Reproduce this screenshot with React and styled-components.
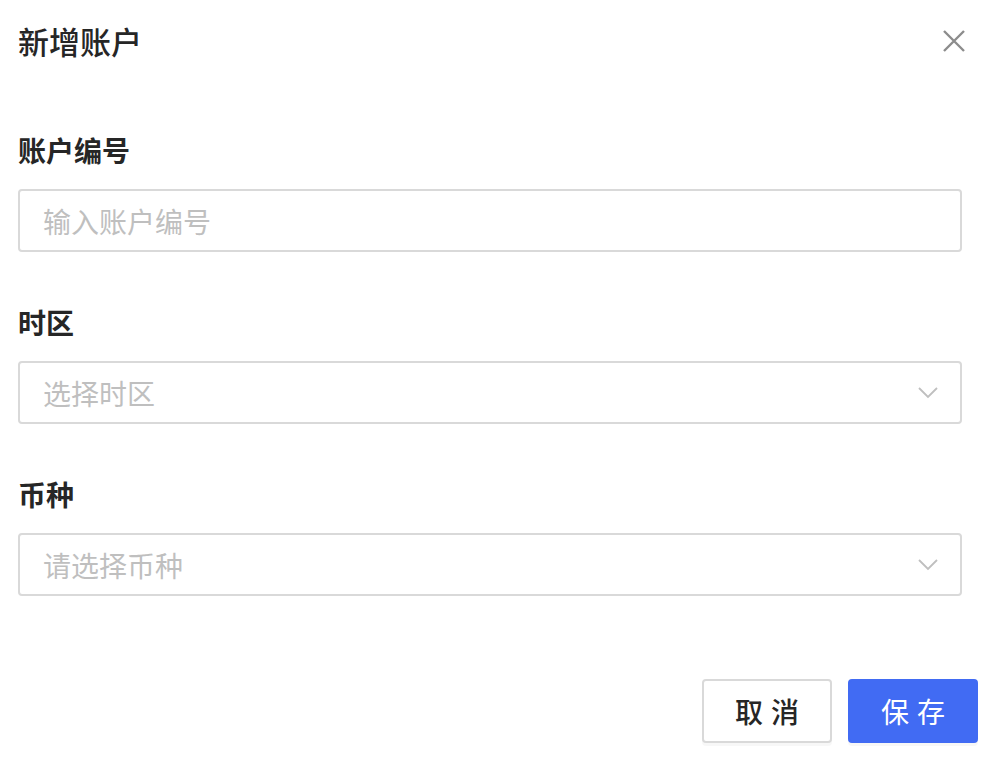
import React, { Component } from 'react';
import styled, { createGlobalStyle } from 'styled-components';

const GlobalStyle = createGlobalStyle`
  body {
    margin: 0;
    background: #fff;
    font-family: "Noto Sans CJK SC", "Noto Sans", sans-serif;
  }
`;

const Modal = styled.div`
  width: 996px;
  height: 764px;
  box-sizing: border-box;
  padding: 20px 18px 0 18px;
  display: flex;
  flex-direction: column;
`;

const Header = styled.div`
  display: flex;
  align-items: center;
  justify-content: space-between;
  height: 42px;
  margin-bottom: 70px;
`;

const Title = styled.h1`
  margin: 0;
  font-size: 31px;
  font-weight: 500;
  line-height: 42px;
  color: #262626;
`;

const CloseButton = styled.button`
  border: none;
  background: none;
  padding: 0;
  margin-right: 12px;
  width: 24px;
  height: 24px;
  display: flex;
  align-items: center;
  justify-content: center;
  cursor: pointer;
`;

const Form = styled.div`
  padding-right: 16px;
  display: flex;
  flex-direction: column;
  gap: 52px;
`;

const Field = styled.div`
  display: flex;
  flex-direction: column;
  gap: 21px;
`;

const Label = styled.label`
  font-size: 28px;
  font-weight: 700;
  line-height: 36px;
  color: #262626;
`;

const Box = styled.div`
  height: 63px;
  box-sizing: border-box;
  border: 2px solid #d9d9d9;
  border-radius: 4px;
  padding: 0 22px 0 23px;
  display: flex;
  align-items: center;
  justify-content: space-between;
`;

const Input = styled.input`
  border: none;
  outline: none;
  flex: 1;
  font-family: inherit;
  font-size: 28px;
  color: #262626;
  padding: 0;
  background: transparent;
  &::placeholder {
    color: #bfbfbf;
  }
`;

const Placeholder = styled.span`
  font-size: 28px;
  color: #bfbfbf;
`;

const Footer = styled.div`
  margin-top: 83px;
  display: flex;
  justify-content: flex-end;
  gap: 16px;
`;

const Button = styled.button`
  width: 130px;
  height: 64px;
  box-sizing: border-box;
  border-radius: 4px;
  font-family: inherit;
  font-size: 28px;
  font-weight: ${p => (p.primary ? 400 : 500)};
  letter-spacing: 8px;
  text-indent: 8px;
  cursor: pointer;
  box-shadow: 0 3px 0 rgba(0, 0, 0, 0.03);
  border: 2px solid ${p => (p.primary ? '#416bf3' : '#d9d9d9')};
  background: ${p => (p.primary ? '#416bf3' : '#fff')};
  color: ${p => (p.primary ? '#fff' : '#262626')};
`;

const Chevron = () => (
  <svg width="20" height="12" viewBox="0 0 20 12" fill="none">
    <path d="M1 1l9 9 9-9" stroke="#bfbfbf" strokeWidth="1.8" />
  </svg>
);

class App extends Component {
  render() {
    return (
      <Modal>
        <GlobalStyle />
        <Header>
          <Title>新增账户</Title>
          <CloseButton>
            <svg width="24" height="24" viewBox="0 0 24 24" fill="none">
              <path d="M2 2l20 20M22 2L2 22" stroke="#8c8c8c" strokeWidth="2.4" />
            </svg>
          </CloseButton>
        </Header>
        <Form>
          <Field>
            <Label>账户编号</Label>
            <Box>
              <Input placeholder="输入账户编号" />
            </Box>
          </Field>
          <Field>
            <Label>时区</Label>
            <Box>
              <Placeholder>选择时区</Placeholder>
              <Chevron />
            </Box>
          </Field>
          <Field>
            <Label>币种</Label>
            <Box>
              <Placeholder>请选择币种</Placeholder>
              <Chevron />
            </Box>
          </Field>
        </Form>
        <Footer>
          <Button>取消</Button>
          <Button primary>保存</Button>
        </Footer>
      </Modal>
    );
  }
}

export default App;
